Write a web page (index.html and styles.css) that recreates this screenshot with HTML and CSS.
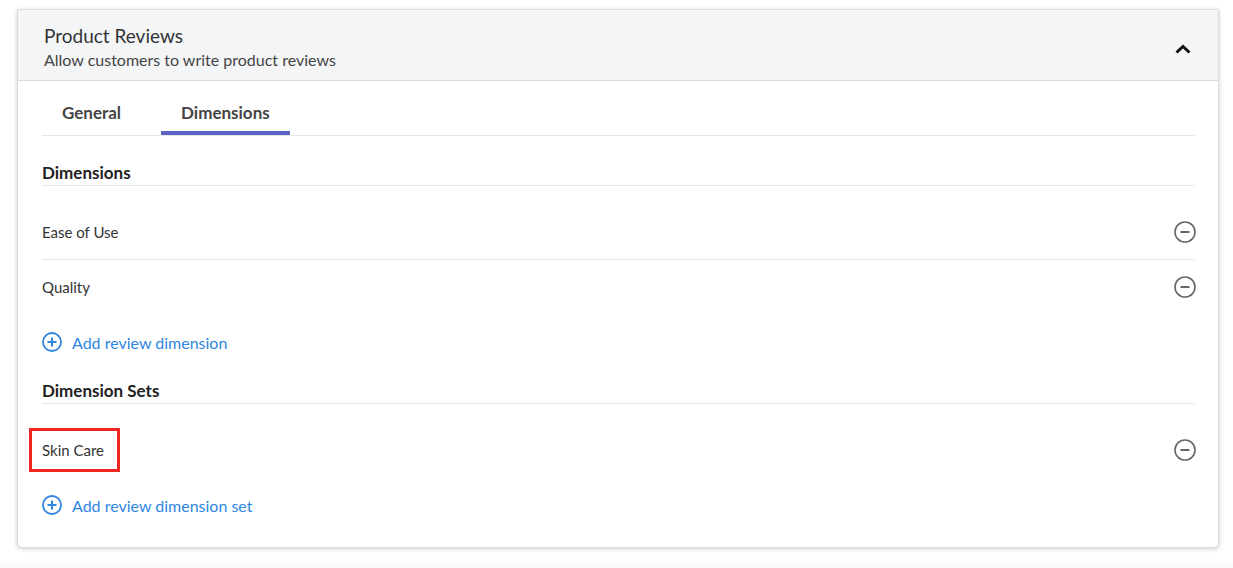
FILE: index.html
```html
<!DOCTYPE html>
<html>
<head>
<meta charset="utf-8">
<link rel="stylesheet" href="styles.css">
</head>
<body>
<div class="page">
  <section class="card">
    <header class="card-header">
      <div class="titles">
        <div class="title">Product Reviews</div>
        <div class="subtitle">Allow customers to write product reviews</div>
      </div>
      <svg class="chevron" width="16" height="10" viewBox="0 0 16 10"><path d="M1.5 8.5 L8 2.5 L14.5 8.5" fill="none" stroke="#111" stroke-width="3"/></svg>
    </header>
    <div class="card-body">
      <nav class="tabs">
        <div class="tab">General</div>
        <div class="tab active">Dimensions</div>
      </nav>
      <h3 class="section-title">Dimensions</h3>
      <div class="row bordered">
        <span class="label">Ease of Use</span>
        <svg class="minus" width="22" height="22" viewBox="0 0 22 22"><circle cx="11" cy="11" r="10" fill="none" stroke="#666" stroke-width="1.6"/><path d="M6.5 11 H15.5" stroke="#666" stroke-width="2"/></svg>
      </div>
      <div class="row">
        <span class="label">Quality</span>
        <svg class="minus" width="22" height="22" viewBox="0 0 22 22"><circle cx="11" cy="11" r="10" fill="none" stroke="#666" stroke-width="1.6"/><path d="M6.5 11 H15.5" stroke="#666" stroke-width="2"/></svg>
      </div>
      <div class="add">
        <svg width="20" height="20" viewBox="0 0 20 20"><circle cx="10" cy="10" r="9" fill="none" stroke="#2f86e0" stroke-width="1.8"/><path d="M5.5 10 H14.5 M10 5.5 V14.5" stroke="#2f86e0" stroke-width="2"/></svg>
        <span>Add review dimension</span>
      </div>
      <h3 class="section-title second">Dimension Sets</h3>
      <div class="row">
        <span class="label highlighted">Skin Care</span>
        <svg class="minus" width="22" height="22" viewBox="0 0 22 22"><circle cx="11" cy="11" r="10" fill="none" stroke="#666" stroke-width="1.6"/><path d="M6.5 11 H15.5" stroke="#666" stroke-width="2"/></svg>
      </div>
      <div class="add">
        <svg width="20" height="20" viewBox="0 0 20 20"><circle cx="10" cy="10" r="9" fill="none" stroke="#2f86e0" stroke-width="1.8"/><path d="M5.5 10 H14.5 M10 5.5 V14.5" stroke="#2f86e0" stroke-width="2"/></svg>
        <span>Add review dimension set</span>
      </div>
    </div>
  </section>
</div>
</body>
</html>
```
FILE: styles.css
```css
html, body {
  margin: 0;
  padding: 0;
}
body {
  background: #fafafa;
  font-family: Lato, "Open Sans", sans-serif;
  color: #333;
}
.page {
  background: #fff;
  padding: 9px 14px 5px 17px;
  height: 549px;
}
.card {
  border: 1px solid #dcdcdc;
  border-radius: 0 0 5px 5px;
  background: #fff;
  box-shadow: 0 1px 4px rgba(0,0,0,0.2);
}
.card-header {
  background: #f4f5f7;
  border-bottom: 1px solid #dcdcdc;
  padding: 14px 26px 8px 26px;
  display: flex;
  align-items: center;
  justify-content: space-between;
}
.title {
  font-size: 19px;
  line-height: 24px;
  color: #333;
}
.subtitle {
  font-size: 16px;
  line-height: 24px;
  color: #444;
}
.chevron {
  margin-right: 1px;
  margin-top: 1px;
}
.card-body {
  padding: 0 23px 14px 24px;
}
.tabs {
  display: flex;
  gap: 20px;
  padding-top: 20px;
  border-bottom: 1px solid #e6e6e6;
}
.tab {
  padding: 0 20px 6px 20px;
  font-size: 17px;
  font-weight: bold;
  line-height: 24px;
  color: #444;
  border-bottom: 4px solid transparent;
}
.tab.active {
  border-bottom-color: #5b64c6;
}
.section-title {
  margin: 25px 0 0 0;
  font-size: 17px;
  line-height: 24px;
  font-weight: bold;
  color: #222;
  border-bottom: 1px solid #e6e6e6;
}
.section-title.second {
  margin-top: 9px;
}
.row {
  height: 54px;
  display: flex;
  align-items: center;
  justify-content: space-between;
  font-size: 15px;
  line-height: 18px;
  color: #333;
}
.section-title + .row {
  margin-top: 19px;
}
.row.bordered {
  border-bottom: 1px solid #e6e6e6;
}
.minus {
  margin-right: -1px;
}
.label.highlighted {
  display: inline-block;
  border: 3px solid #ee2722;
  padding: 10px 13px 10px 10px;
  margin-left: -13px;
}
.add {
  height: 56px;
  display: flex;
  align-items: center;
  gap: 10px;
  color: #2f86e0;
  font-size: 16px;
}
.add svg {
  flex-shrink: 0;
}
```
